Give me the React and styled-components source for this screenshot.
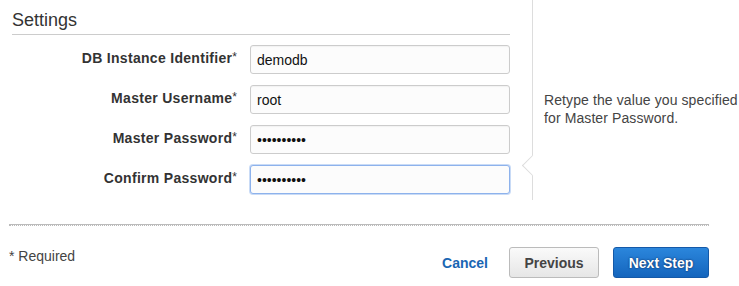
import React from 'react';
import styled, { createGlobalStyle } from 'styled-components';

const GlobalStyle = createGlobalStyle`
  body {
    margin: 0;
    background: #fff;
    font-family: "Liberation Sans", Arial, sans-serif;
    color: #333;
  }
`;

const Page = styled.div`
  width: 739px;
  height: 286px;
  overflow: hidden;
`;

const Top = styled.div`
  display: flex;
  height: 200px;
`;

const FormColumn = styled.div`
  position: relative;
  width: 498px;
  padding: 0 22px 0 12px;
  border-right: 1px solid #ddd;
`;

// little notch pointing at the focused field
const Notch = styled.div`
  position: absolute;
  right: -8px;
  top: 158px;
  width: 14px;
  height: 14px;
  background: #fff;
  border-left: 1px solid #ddd;
  border-bottom: 1px solid #ddd;
  transform: rotate(45deg);
`;

const Heading = styled.h2`
  margin: 10px 0 10px;
  padding-bottom: 4px;
  font-size: 18px;
  line-height: 20px;
  font-weight: normal;
  color: #333;
  border-bottom: 1px solid #ccc;
`;

const Row = styled.div`
  display: grid;
  grid-template-columns: 225px 260px;
  column-gap: 13px;
  align-items: center;
  margin-bottom: 11px;
`;

const Label = styled.label`
  text-align: right;
  font-size: 14px;
  font-weight: bold;
  letter-spacing: 0.3px;
  color: #333;
  padding-bottom: 3px;
`;

const Star = styled.span`
  font-weight: normal;
  font-size: 12px;
  letter-spacing: 0;
  vertical-align: 2px;
`;

const Input = styled.input`
  box-sizing: border-box;
  width: 260px;
  height: 29px;
  padding: 0 6px;
  font-family: "Liberation Sans", Arial, sans-serif;
  font-size: 14px;
  color: #111;
  background: #fcfcfc;
  border: 1px solid ${p => (p.$focused ? '#8db2ec' : '#ccc')};
  border-radius: 3px;
  box-shadow: ${p => (p.$focused ? '0 0 0 1px #c9dbf6' : 'inset 0 1px 1px rgba(0,0,0,0.04)')};
  outline: none;
`;

const Help = styled.div`
  padding: 91px 0 0 11px;
  font-size: 14px;
  line-height: 18px;
  letter-spacing: 0.1px;
  color: #444;
  white-space: nowrap;
`;

const Footer = styled.div`
  margin: 24px 30px 0 9px;
  border-top: 1px solid #bbb;
  padding-top: 22px;
  position: relative;
  display: flex;
  align-items: flex-start;
  justify-content: space-between;
  &::before {
    content: '';
    position: absolute;
    left: 0;
    right: 0;
    top: 0;
    border-top: 1px dotted #bbb;
  }
`;

const Required = styled.div`
  font-size: 14px;
  line-height: 18px;
  color: #444;
`;

const Actions = styled.div`
  display: flex;
  align-items: center;
`;

const CancelLink = styled.a`
  font-size: 14px;
  font-weight: bold;
  color: #1a66b3;
  text-decoration: none;
  margin-right: 21px;
  cursor: pointer;
`;

const Button = styled.button`
  box-sizing: border-box;
  height: 31px;
  width: ${p => p.$width}px;
  margin-left: ${p => p.$gap || 0}px;
  font-family: "Liberation Sans", Arial, sans-serif;
  font-size: 14px;
  font-weight: bold;
  border-radius: 3px;
  cursor: pointer;
  color: ${p => (p.$primary ? '#fff' : '#444')};
  background: ${p => (p.$primary
    ? 'linear-gradient(#2b86dc, #1465bd)'
    : 'linear-gradient(#fafafa, #e6e6e6)')};
  border: 1px solid ${p => (p.$primary ? '#1459a8' : '#bbb')};
  text-shadow: ${p => (p.$primary ? '0 0 2px rgba(0,20,60,0.9)' : 'none')};
`;

const fields = [
  { label: 'DB Instance Identifier', value: 'demodb', type: 'text' },
  { label: 'Master Username', value: 'root', type: 'text' },
  { label: 'Master Password', value: 'xxxxxxxxxx', type: 'password' },
  { label: 'Confirm Password', value: 'xxxxxxxxxx', type: 'password', focused: true },
];

export default function App() {
  return (
    <Page>
      <GlobalStyle />
      <Top>
        <FormColumn>
          <Heading>Settings</Heading>
          {fields.map(f => (
            <Row key={f.label}>
              <Label>{f.label}<Star>*</Star></Label>
              <Input type={f.type} defaultValue={f.value} readOnly $focused={f.focused} />
            </Row>
          ))}
          <Notch />
        </FormColumn>
        <Help>
          Retype the value you specified<br />
          for Master Password.
        </Help>
      </Top>
      <Footer>
        <Required>* Required</Required>
        <Actions>
          <CancelLink>Cancel</CancelLink>
          <Button $width={90}>Previous</Button>
          <Button $width={96} $gap={14} $primary>Next Step</Button>
        </Actions>
      </Footer>
    </Page>
  );
}
